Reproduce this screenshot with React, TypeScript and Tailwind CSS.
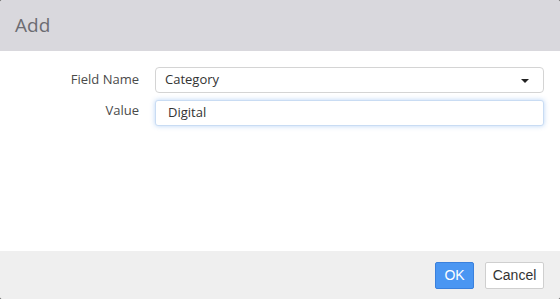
import React from "react";

export default function App() {
  return (
    <div className="h-[299px] w-[560px] bg-[#6b6b6b]">
      <div
        className="flex h-full w-full flex-col overflow-hidden rounded-[3px] bg-white"
        style={{ fontFamily: '"Open Sans", "Noto Sans", sans-serif' }}
      >
        <div className="flex h-[51px] shrink-0 items-center bg-[#d9d8dd] px-[15px]">
          <span className="text-[19px] leading-none text-[#6c6c72]">Add</span>
        </div>

        <div className="flex flex-1 flex-col gap-[7px] pt-[16px] pr-[16px]">
          <div className="flex items-start gap-[16px]">
            <label className="w-[139px] pt-[3px] text-right text-[13px] text-[#4a4a4a]">
              Field Name
            </label>
            <div className="relative flex h-[26px] flex-1 items-center rounded-[4px] border border-[#d4d4d4] bg-white pl-[9px] text-[13px] text-[#333]">
              Category
              <span className="absolute right-[14px] top-[11px] h-0 w-0 border-x-[4px] border-t-[4px] border-x-transparent border-t-[#222]" />
            </div>
          </div>
          <div className="flex items-start gap-[16px]">
            <label className="w-[139px] pt-[1px] text-right text-[13px] text-[#4a4a4a]">
              Value
            </label>
            <div className="flex h-[26px] flex-1 items-center rounded-[3px] border border-[#c9dcf3] bg-white pl-[12px] text-[13px] text-[#333] shadow-[0_0_5px_rgba(100,160,235,0.45)]">
              Digital
            </div>
          </div>
        </div>

        <div
          className="flex h-[48px] shrink-0 items-center justify-end gap-[11px] bg-[#efefef] pr-[16px]"
          style={{ fontFamily: '"Liberation Sans", Arial, sans-serif' }}
        >
          <button className="h-[27px] w-[39px] rounded-[2px] border border-[#3a80dc] bg-[#4a96f2] text-[14px] text-white">
            OK
          </button>
          <button className="h-[27px] w-[59px] rounded-[2px] border border-[#cfcfcf] bg-white text-[14px] text-[#333]">
            Cancel
          </button>
        </div>
      </div>
    </div>
  );
}
